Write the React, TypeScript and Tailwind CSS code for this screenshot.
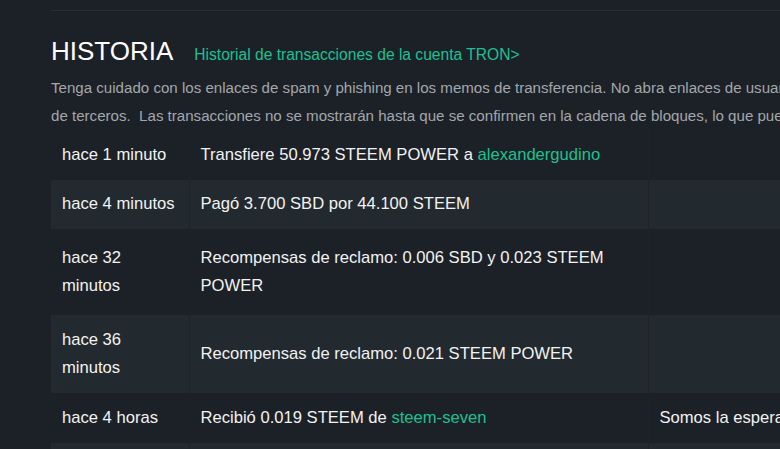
import React from "react";

type Row = {
  when: string[];
  desc: React.ReactNode;
  memo?: string;
  tall?: boolean;
};

const rows: Row[] = [
  {
    when: ["hace 1 minuto"],
    desc: (
      <>
        Transfiere 50.973 STEEM POWER a{" "}
        <span className="text-[#1fc08f]">alexandergudino</span>
      </>
    ),
  },
  { when: ["hace 4 minutos"], desc: "Pagó 3.700 SBD por 44.100 STEEM" },
  {
    when: ["hace 32", "minutos"],
    desc: (
      <>
        Recompensas de reclamo: 0.006 SBD y 0.023 STEEM
        <br />
        POWER
      </>
    ),
    tall: true,
  },
  { when: ["hace 36", "minutos"], desc: "Recompensas de reclamo: 0.021 STEEM POWER" },
  {
    when: ["hace 4 horas"],
    desc: (
      <>
        Recibió 0.019 STEEM de <span className="text-[#1fc08f]">steem-seven</span>
      </>
    ),
    memo: "Somos la esperanza de la comunidad",
  },
  { when: ["hace 5 horas"], desc: "Recompensas de reclamo: 0.012 STEEM POWER" },
];

export default function App() {
  return (
    <div
      className="w-[780px] h-[449px] overflow-hidden bg-[#1c2128] text-[#f2f2f2]"
      style={{ fontFamily: '"Liberation Sans", Arial, sans-serif' }}
    >
      <div className="pl-[51px] pt-[10px] w-[1200px]">
        <div className="border-t border-[#262f37]" />

        <div className="flex items-baseline gap-[21px] mt-[26px]">
          <h2 className="text-[26px] leading-[28px] text-white">HISTORIA</h2>
          <span className="text-[15.6px] text-[#1fc08f]">
            Historial de transacciones de la cuenta TRON&gt;
          </span>
        </div>

        <div className="mt-[8px] text-[15.1px] leading-[28px] text-[#a3a7ab] whitespace-pre">
          <div>
            Tenga cuidado con los enlaces de spam y phishing en los memos de transferencia. No abra enlaces de usuarios desconocidos o
          </div>
          <div>
            de terceros.  Las transacciones no se mostrarán hasta que se confirmen en la cadena de bloques, lo que puede tardar unos minutos.
          </div>
        </div>

        <table className="mt-[0px] w-[1100px] border-collapse text-[16.6px] leading-[28.5px]">
          <colgroup>
            <col className="w-[138px]" />
            <col className="w-[459px]" />
            <col />
          </colgroup>
          <tbody>
            {rows.map((r, i) => {
              const pad = r.tall ? "px-[11px] py-[14.5px]" : "px-[11px] py-[10.5px]";
              return (
                <tr key={i} className={i % 2 === 1 ? "bg-[#222a30]" : ""}>
                  <td className={`${pad} align-middle border-r border-[#1d2329]`}>
                    {r.when.map((w, j) => (
                      <div key={j}>{w}</div>
                    ))}
                  </td>
                  <td className={`${pad} align-middle border-r border-[#1d2329]`}>{r.desc}</td>
                  <td className={`${pad} align-middle whitespace-nowrap`}>{r.memo ?? ""}</td>
                </tr>
              );
            })}
          </tbody>
        </table>
      </div>
    </div>
  );
}
